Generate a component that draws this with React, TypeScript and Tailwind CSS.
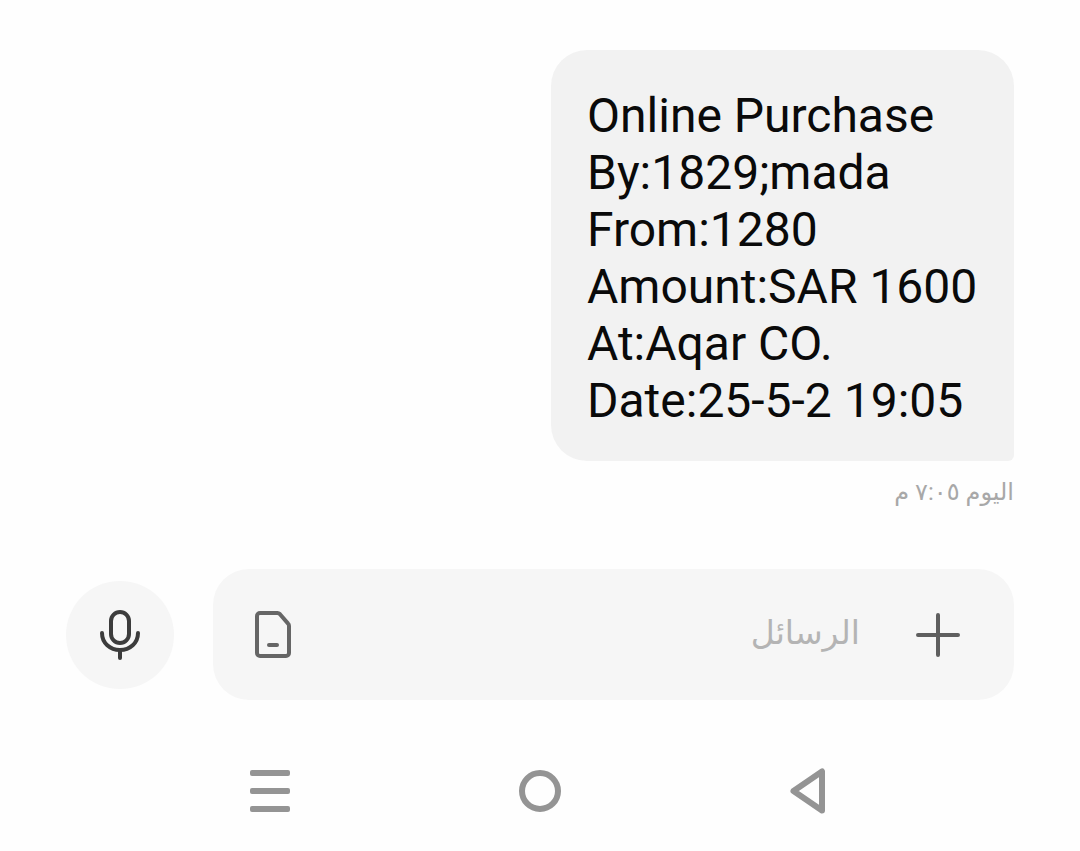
const lines = [
  'Online Purchase',
  'By:1829;mada',
  'From:1280',
  'Amount:SAR 1600',
  'At:Aqar CO.',
  'Date:25-5-2 19:05',
];

function MicIcon() {
  return (
    <svg width="40" height="50" viewBox="0 0 40 50" fill="none" stroke="#3c3c3c" strokeWidth="4" strokeLinecap="round" strokeLinejoin="round">
      <rect x="11" y="2" width="18" height="31" rx="9" />
      <path d="M2 23c0 10 8 17 18 17s18-7 18-17" />
      <path d="M20 40v8" />
    </svg>
  );
}

function SimIcon() {
  return (
    <svg width="36" height="47" viewBox="0 0 36 47" fill="none" stroke="#666666" strokeWidth="4" strokeLinecap="round" strokeLinejoin="round">
      <path d="M5 2h17.500c.9 0 1.700.4 2.300 1l8.100 9.400c.7.700 1.100 1.600 1.100 2.500V42a3 3 0 0 1-3 3H5a3 3 0 0 1-3-3V5a3 3 0 0 1 3-3z" />
      <path d="M14 34h8" />
    </svg>
  );
}

function PlusIcon() {
  return (
    <svg width="44" height="44" viewBox="0 0 44 44" fill="none" stroke="#5f5f5f" strokeWidth="4" strokeLinecap="round">
      <path d="M22 2v40M2 22h40" />
    </svg>
  );
}

function RecentsIcon() {
  return (
    <div className="flex w-[40px] flex-col gap-[12px]">
      <div className="h-[6px] rounded-[2px] bg-[#949494]" />
      <div className="h-[6px] rounded-[2px] bg-[#949494]" />
      <div className="h-[6px] rounded-[2px] bg-[#949494]" />
    </div>
  );
}

function BackIcon() {
  return (
    <svg width="36" height="46" viewBox="0 0 36 46" fill="none" stroke="#949494" strokeWidth="6" strokeLinejoin="round">
      <path d="M32 3.500v39L3.500 23z" />
    </svg>
  );
}

export default function App() {
  return (
    <div className="flex h-[851px] w-[1080px] flex-col bg-[#fefefe] font-['Roboto','DejaVu_Sans',sans-serif]">
      <div className="flex justify-end pr-[66px] pt-[50px]">
        <div className="h-[411px] w-[463px] rounded-[36px] rounded-br-[6px] bg-[#f2f2f2] pl-[36px] pt-[37px] text-[48px] leading-[57px] text-[#0a0a0a]">
          {lines.map((line) => (
            <div key={line} className="whitespace-nowrap">{line}</div>
          ))}
        </div>
      </div>

      <div dir="rtl" className="mr-[66px] mt-[13px] text-[24px] leading-[36px] text-[#a8a8a8]">
        اليوم ٧:٠٥ م
      </div>

      <div className="mt-[59px] flex items-center gap-[39px] px-[66px]">
        <div className="flex h-[108px] w-[108px] items-center justify-center rounded-full bg-[#f6f6f6]">
          <MicIcon />
        </div>
        <div className="flex h-[131px] flex-1 items-center justify-between rounded-[36px] bg-[#f6f6f6] pl-[42px] pr-[54px]">
          <SimIcon />
          <div className="flex items-center gap-[56px]">
            <span className="relative top-[-2px] text-[33px] text-[#b4b4b4]">الرسائل</span>
            <PlusIcon />
          </div>
        </div>
      </div>

      <div className="mt-[68px] flex items-center justify-between pl-[250px] pr-[254px]">
        <RecentsIcon />
        <div className="h-[42px] w-[42px] rounded-full border-[6px] border-[#949494]" />
        <BackIcon />
      </div>
    </div>
  );
}
